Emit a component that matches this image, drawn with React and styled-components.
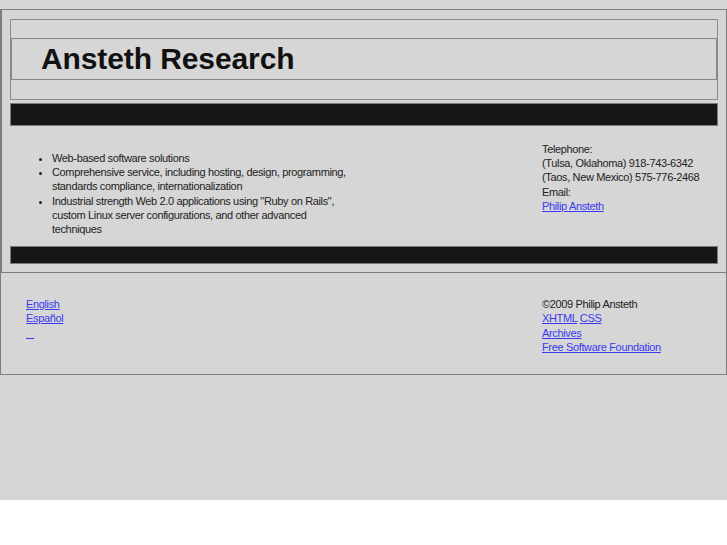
import React from 'react';
import styled, { createGlobalStyle } from 'styled-components';

const GlobalStyle = createGlobalStyle`
  html, body {
    margin: 0;
    padding: 0;
    background: #fff;
  }
  body {
    font-family: 'Liberation Sans', Arial, sans-serif;
  }
`;

const Page = styled.div`
  height: 500px;
  box-sizing: border-box;
  padding-top: 9px;
  background: #d6d6d6;
  color: #222;
  font-size: 11px;
  letter-spacing: -0.35px;
  line-height: 14.2px;
`;

const Frame = styled.div`
  border: 1px solid #7d7d7d;
  border-left-width: 2px;
  padding: 9px 8px 8px 8px;
`;

const Header = styled.div`
  border: 1px solid #8a8a8a;
  padding: 18px 0 19px;
`;

const TitleBox = styled.div`
  border: 1px solid #868686;
  height: 40px;
  padding-left: 29px;
`;

const Title = styled.h1`
  margin: 0;
  font-size: 30px;
  line-height: 40px;
  font-weight: bold;
  letter-spacing: -0.1px;
  color: #111;
`;

const Bar = styled.div`
  margin-top: ${p => p.gap}px;
  height: ${p => p.h}px;
  background: #161616;
  border: 1px solid #7a7a7a;
`;

const Content = styled.div`
  display: grid;
  grid-template-columns: 532px 1fr;
  align-items: start;
  padding: 16px 0 10px;
`;

const List = styled.ul`
  margin: 9px 0 0;
  padding-left: 42px;
  width: 300px;
  list-style: disc;
`;

const Contact = styled.div``;

const Line = styled.div``;

const Link = styled.a`
  color: #3a3af2;
  text-decoration: underline;
`;

const Footer = styled.div`
  display: grid;
  grid-template-columns: 516px 1fr;
  border: 1px solid #7d7d7d;
  border-top: none;
  padding: 24px 0 20px 25px;
`;

const Column = styled.div`
  display: flex;
  flex-direction: column;
  align-items: flex-start;
`;

const App = () => (
  <Page>
    <GlobalStyle />
    <Frame>
      <Header>
        <TitleBox>
          <Title>Ansteth Research</Title>
        </TitleBox>
      </Header>
      <Bar gap={3} h={21} />
      <Content>
        <List>
          <li>Web-based software solutions</li>
          <li>Comprehensive service, including hosting, design, programming, standards compliance, internationalization</li>
          <li>Industrial strength Web 2.0 applications using "Ruby on Rails", custom Linux server configurations, and other advanced techniques</li>
        </List>
        <Contact>
          <Line>Telephone:</Line>
          <Line>(Tulsa, Oklahoma) 918-743-6342</Line>
          <Line>(Taos, New Mexico) 575-776-2468</Line>
          <Line>Email:</Line>
          <Line>
            <Link href="#">Philip Ansteth</Link>
          </Line>
        </Contact>
      </Content>
      <Bar gap={0} h={16} />
    </Frame>
    <Footer>
      <Column>
        <Link href="#">English</Link>
        <Link href="#">Español</Link>
        <Link href="#">{'\u00a0\u00a0\u00a0'}</Link>
      </Column>
      <Column>
        <Line>©2009 Philip Ansteth</Line>
        <Line>
          <Link href="#">XHTML</Link> <Link href="#">CSS</Link>
        </Line>
        <Link href="#">Archives</Link>
        <Link href="#">Free Software Foundation</Link>
      </Column>
    </Footer>
  </Page>
);

export default App;
